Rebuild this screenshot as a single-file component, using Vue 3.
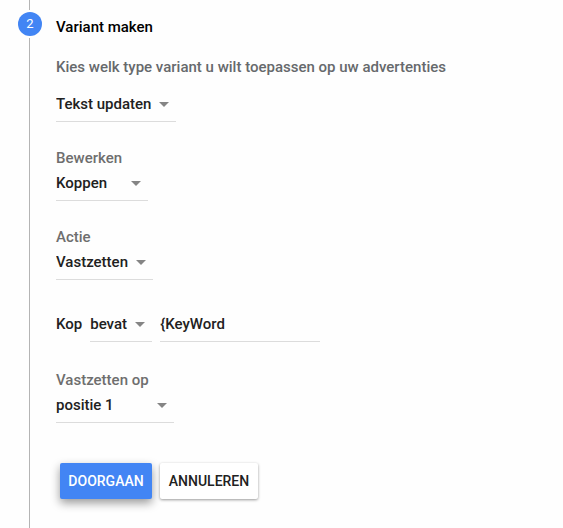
<script setup>
import { ref } from 'vue'

const variantType = ref('Tekst updaten')
const part = ref('Koppen')
const action = ref('Vastzetten')
const condition = ref('bevat')
const keyword = ref('{KeyWord')
const position = ref('positie 1')
</script>

<template>
  <main class="step">
    <div class="rail">
      <span class="line line-top"></span>
      <span class="badge">2</span>
      <span class="line line-rest"></span>
    </div>

    <form class="content" @submit.prevent>
      <h2 class="title">Variant maken</h2>
      <label class="description" for="variant-type">Kies welk type variant u wilt toepassen op uw advertenties</label>
      <div class="picker picker-type">
        <select id="variant-type" v-model="variantType">
          <option>Tekst updaten</option>
        </select>
        <svg class="arrow" viewBox="0 0 10 5" aria-hidden="true"><path d="M0 0h10L5 5z" /></svg>
      </div>

      <div class="field">
        <label for="part">Bewerken</label>
        <div class="picker picker-part">
          <select id="part" v-model="part">
            <option>Koppen</option>
          </select>
          <svg class="arrow" viewBox="0 0 10 5" aria-hidden="true"><path d="M0 0h10L5 5z" /></svg>
        </div>
      </div>

      <div class="field">
        <label for="action">Actie</label>
        <div class="picker picker-action">
          <select id="action" v-model="action">
            <option>Vastzetten</option>
          </select>
          <svg class="arrow" viewBox="0 0 10 5" aria-hidden="true"><path d="M0 0h10L5 5z" /></svg>
        </div>
      </div>

      <div class="condition">
        <label for="condition">Kop</label>
        <div class="picker picker-condition">
          <select id="condition" v-model="condition">
            <option>bevat</option>
          </select>
          <svg class="arrow" viewBox="0 0 10 5" aria-hidden="true"><path d="M0 0h10L5 5z" /></svg>
        </div>
        <input v-model="keyword" class="keyword" type="text" aria-labelledby="condition" />
      </div>

      <div class="field">
        <label for="position">Vastzetten op</label>
        <div class="picker picker-position">
          <select id="position" v-model="position">
            <option>positie 1</option>
          </select>
          <svg class="arrow" viewBox="0 0 10 5" aria-hidden="true"><path d="M0 0h10L5 5z" /></svg>
        </div>
      </div>

      <div class="actions">
        <button class="button primary" type="submit">DOORGAAN</button>
        <button class="button" type="button">ANNULEREN</button>
      </div>
    </form>
  </main>
</template>

<style>
body {
  margin: 0;
  background: #fefefe;
}
</style>

<style scoped>
.step {
  box-sizing: border-box;
  display: flex;
  gap: 14px;
  min-height: 100vh;
  padding: 0 16px 0 18px;
  font: 500 15px/20px Roboto, sans-serif;
  color: #212121;
}

.rail {
  display: flex;
  flex: none;
  flex-direction: column;
  align-items: center;
  gap: 2px;
  width: 24px;
}

.line {
  width: 1px;
  margin-right: 1px;
  background: #b4b4b4;
}

.line-top {
  height: 10px;
}

.line-rest {
  flex: 1;
}

.badge {
  width: 24px;
  border-radius: 50%;
  background: #4285f4;
  color: #fff;
  font-size: 13px;
  font-weight: 400;
  line-height: 24px;
  text-align: center;
}

.content {
  display: flex;
  flex: 1;
  flex-direction: column;
  align-items: flex-start;
  min-width: 0;
  padding: 17px 0 24px;
}

.title {
  margin: 0 0 20px;
  color: #000;
  font-size: 15px;
  font-weight: 500;
}

.description {
  margin-bottom: 17px;
  color: #66696c;
}

.field {
  display: flex;
  flex-direction: column;
  gap: 5px;
  margin-top: 26px;
  color: #6e6e6e;
}

.picker {
  display: grid;
  align-items: start;
  border-bottom: 1px solid #dcdcdc;
}

.picker select,
.arrow {
  grid-area: 1 / 1;
}

.picker select {
  width: 100%;
  height: 27px;
  margin: 0;
  padding: 0 20px 7px 0;
  border: 0;
  outline: 0;
  appearance: none;
  background: transparent;
  color: #212121;
  font: inherit;
}

.arrow {
  justify-self: end;
  width: 10px;
  height: 5px;
  margin: 8px 7px 0 0;
  fill: #858585;
  pointer-events: none;
}

.picker-type {
  width: 120px;
}

.picker-part {
  width: 92px;
}

.picker-action {
  width: 97px;
}

.picker-condition {
  width: 62px;
}

.picker-position {
  width: 118px;
}

.condition {
  display: flex;
  gap: 8px;
  margin: 34px 0 2px;
}

.keyword {
  box-sizing: border-box;
  width: 160px;
  height: 28px;
  padding: 0 0 7px;
  border: 0;
  border-bottom: 1px solid #dcdcdc;
  border-radius: 0;
  outline: 0;
  background: transparent;
  color: inherit;
  font: inherit;
}

.actions {
  display: flex;
  gap: 8px;
  margin: 40px 0 0 4px;
}

.button {
  min-width: 98px;
  height: 36px;
  padding: 0 8px;
  border: 0;
  border-radius: 2px;
  background: #fff;
  box-shadow: 0 1px 3px rgba(0, 0, 0, 0.4);
  color: #212121;
  font: 500 14px/20px Roboto, sans-serif;
}

.primary {
  min-width: 92px;
  background: #4285f4;
  box-shadow: 0 4px 10px rgba(0, 0, 0, 0.4);
  color: #fff;
}
</style>
